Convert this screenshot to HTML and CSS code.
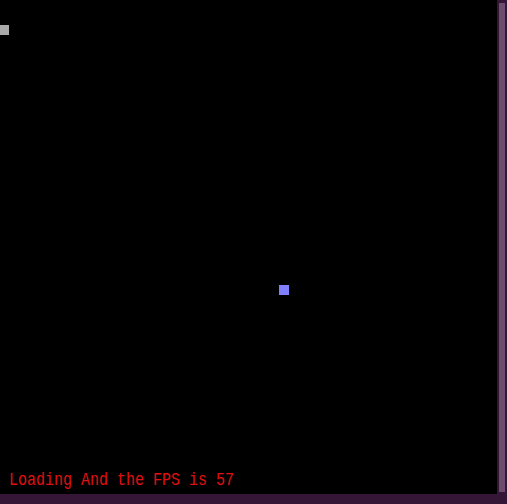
FILE: index.html
```html
<!DOCTYPE html>
<html>
<head>
<meta charset="utf-8">
<link rel="stylesheet" href="styles.css">
</head>
<body>
<div class="screen">
  <div class="row">
    <div class="canvas">
      <div class="sprite grey"></div>
      <div class="sprite blue"></div>
      <div class="status">Loading And the FPS is 57</div>
    </div>
    <div class="vscroll"><div class="thumb"></div></div>
  </div>
  <div class="hbar"></div>
</div>
</body>
</html>
```
FILE: styles.css
```css
html, body {
  margin: 0;
  padding: 0;
  background: #000;
  overflow: hidden;
}
.screen {
  width: 507px;
  height: 504px;
  display: flex;
  flex-direction: column;
}
.row {
  flex: 1;
  display: flex;
}
.canvas {
  flex: 1;
  position: relative;
  background: #000;
}
.sprite {
  position: absolute;
}
.grey {
  left: 0;
  top: 25px;
  width: 9px;
  height: 10px;
  background: #a9a9a9;
}
.blue {
  left: 279px;
  top: 285px;
  width: 10px;
  height: 10px;
  background: #8080ff;
}
.status {
  position: absolute;
  left: 9px;
  top: 471px;
  font-family: "Liberation Mono", monospace;
  font-size: 15px;
  line-height: 18px;
  color: #e01010;
  transform: scaleY(1.2);
  transform-origin: left top;
  white-space: pre;
}
.vscroll {
  width: 10px;
  background: #361636;
  padding: 3px 2px 2px 2px;
  box-sizing: border-box;
  display: flex;
}
.thumb {
  flex: 1;
  background: #6e4c6e;
}
.hbar {
  height: 10px;
  background: #361636;
}
```
